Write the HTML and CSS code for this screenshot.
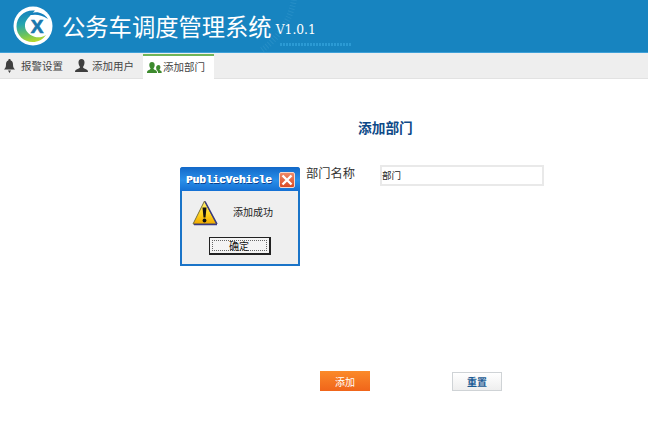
FILE: index.html
```html
<!DOCTYPE html>
<html lang="zh">
<head>
<meta charset="utf-8">
<title>公务车调度管理系统</title>
<link rel="stylesheet" href="styles.css">
</head>
<body>
<header class="top">
  <svg class="logo" width="40" height="40" viewBox="0 0 40 40">
    <defs>
      <linearGradient id="cg" x1="0.3" y1="0" x2="0.5" y2="1">
        <stop offset="0" stop-color="#1480bd"/><stop offset="0.4" stop-color="#25a5b0"/><stop offset="0.75" stop-color="#6cc35c"/><stop offset="1" stop-color="#b5d82e"/>
      </linearGradient>
    </defs>
    <circle cx="20" cy="20" r="19.500" fill="#fff"/>
    <path d="M22 4.500C11 3.500 3.500 11 3.500 20.500 3.500 29.500 11 36 19.500 36c5.500 0 10.500-2.500 13.500-7-3.500 2.300-8 3-11.500 1.700C15 28.500 11.500 24 12 18.500 12.500 14 16.500 10.500 22 4.500z" fill="url(#cg)"/>
    <path d="M15 9C21 4.500 30 5.500 35 13c-5-3-9-4.300-13-4.300-2.500 0-5 .5-7 .3z" fill="#1480bd"/>
    <text x="24" y="27" text-anchor="middle" class="logo-x">X</text>
  </svg>
  <h1 class="brand">公务车调度管理系统</h1>
  <span class="version">V1.0.1</span>
  <svg class="deco" width="100" height="52" viewBox="0 0 100 52">
    <path d="M6 50C20 40 34 22 38 0" fill="none" stroke="#6cbce2" stroke-width="6" stroke-dasharray="1 2" opacity=".18"/>
    <path d="M24 44.500H96" stroke="#2f9fd8" stroke-width="3" stroke-dasharray="2 1" opacity=".85"/>
  </svg>
</header>
<nav class="tabs">
  <a class="tab tab-alarm">
    <svg width="11" height="14" viewBox="0 0 11 14"><path d="M5.500 0c1 0 1.200.7 1.200 1.400C8.500 2 9 3.500 9 5.500c0 2.500.7 3.700 2 5H0c1.300-1.300 2-2.500 2-5 0-2 .5-3.500 2.300-4.100C4.300.7 4.500 0 5.500 0zM4 11.500h3L5.500 14z" fill="#3f3f3f"/></svg>
    报警设置
  </a>
  <a class="tab tab-user">
    <svg width="13" height="14" viewBox="0 0 13 14"><path d="M6.500 0C8.500 0 9.500 1.500 9.500 3.500S8.500 7.500 8 8c0 1 1.500 1.500 3 2.200 1.300.6 2 1.300 2 2.800H0c0-1.500.7-2.200 2-2.800C3.500 9.500 5 9 5 8c-.5-.5-1.500-2.500-1.500-4.500S4.500 0 6.500 0z" fill="#3f3f3f"/></svg>
    添加用户
  </a>
  <a class="tab tab-active">
    <svg width="15" height="13" viewBox="0 0 15 13"><path d="M5 1c1.700 0 2.700 1.200 2.700 3S6.800 7 6.400 7.500c0 .8 1.300 1.200 2.300 1.800 1 .5 1.300 1.300 1.300 2.700H0c0-1.400.3-2.200 1.300-2.700 1-.6 2.300-1 2.300-1.800C3.200 7 2.300 5.800 2.300 4S3.300 1 5 1z" fill="#3d8a2e"/><path d="M11.500 4c1.200 0 1.900.9 1.900 2.200s-.6 2-.9 2.400c0 .5.700.8 1.400 1.200.7.400.8 1 .8 2.200h-3.600c0-1.500-.5-2.500-1.700-3.300.2-.4-.3-1.300-.3-2.500C9.600 4.900 10.300 4 11.500 4z" fill="#3d8a2e"/></svg>
    添加部门
  </a>
</nav>
<main class="page">
  <h2 class="title">添加部门</h2>
  <form class="form">
    <div class="field">
      <label class="label" for="dept">部门名称</label>
      <input class="input" id="dept" type="text" value="部门">
    </div>
    <div class="actions">
      <button class="btn btn-primary" type="button">添加</button>
      <button class="btn btn-reset" type="button">重置</button>
    </div>
  </form>
</main>
<div class="dialog" role="alertdialog">
  <div class="dialog-bar">
    <span class="dialog-title">PublicVehicle</span>
    <span class="dialog-close"><svg width="12" height="12" viewBox="0 0 12 12"><path d="M1.500 1.500l9 9M10.500 1.500l-9 9" stroke="#fff" stroke-width="2.400"/></svg></span>
  </div>
  <div class="dialog-body">
    <div class="dialog-msg">
      <svg width="26" height="26" viewBox="0 0 26 26">
        <defs><linearGradient id="wg" x1="0" y1="0" x2="0" y2="1"><stop offset="0" stop-color="#fff27a"/><stop offset="0.6" stop-color="#ffd21e"/><stop offset="1" stop-color="#f0a800"/></linearGradient></defs>
        <path d="M12.500 1L24.500 24H1z" fill="url(#wg)" stroke="#77703a" stroke-width="1" stroke-linejoin="round"/>
        <path d="M25 24.500H2M13 1.500L25 24" fill="none" stroke="#3a3a80" stroke-width="1.500"/>
        <path d="M10.500 7.500h4l-1 10h-2z" fill="#111"/><circle cx="12.500" cy="20.500" r="1.900" fill="#111"/>
      </svg>
      <span class="dialog-text">添加成功</span>
    </div>
    <button class="dialog-ok" type="button"><span class="dialog-ok-in">确定</span></button>
  </div>
</div>
</body>
</html>
```
FILE: styles.css
```css
* { box-sizing: border-box; }
html, body { margin: 0; height: 100%; }
body {
  width: 648px;
  height: 432px;
  overflow: hidden;
  background: #fff;
  position: relative;
  font-family: "Noto Sans CJK SC", "Liberation Sans", sans-serif;
  color: #333;
}
.top {
  height: 53px;
  background: #1784c0;
  border-bottom: 1px solid #3ea0d8;
  display: flex;
  align-items: center;
  padding-left: 13px;
  position: relative;
}
.logo { flex: none; }
.logo-x {
  font: bold 19px "Liberation Sans", sans-serif;
  fill: #1a78ae;
  stroke: #1a78ae;
  stroke-width: 0.7px;
}
.brand {
  margin: 0 0 0 9px;
  font-size: 23.300px;
  font-weight: 400;
  color: #fff;
  line-height: 1;
  white-space: nowrap;
  position: relative;
  top: 1px;
}
.version {
  margin-left: 4px;
  margin-top: 7px;
  font: 12.300px "DejaVu Serif", serif;
  color: #fff;
}
.deco { position: absolute; left: 256px; top: 0; }
.tabs {
  height: 26px;
  background: #eee;
  border-bottom: 1px solid #e2e2e2;
  display: flex;
  align-items: stretch;
  padding-left: 4px;
}
.tab {
  display: flex;
  align-items: center;
  padding-top: 1px;
  font-size: 10.500px;
  line-height: 1;
  color: #444;
  white-space: nowrap;
}
.tab-alarm { width: 59px; margin-right: 12px; gap: 6px; }
.tab-user { width: 59px; margin-right: 9px; gap: 4px; }
.tab-active {
  width: 71px;
  margin-top: 1px;
  margin-bottom: -1px;
  padding: 0 0 0 4px;
  gap: 1px;
  background: #fff;
  border-top: 2px solid #6fb558;
}
.page { padding-top: 39px; }
.title {
  margin: 0 0 0 358px;
  font-size: 13.700px;
  line-height: 18px;
  font-weight: 700;
  color: #0e4a88;
}
.form { padding-top: 29px; }
.field {
  display: flex;
  align-items: flex-start;
  padding-left: 306px;
  height: 206px;
}
.label {
  font-size: 12.250px;
  line-height: 17px;
  width: 74px;
  color: #333;
}
.input {
  width: 164px;
  height: 21px;
  margin: 0;
  padding: 0 0 2px;
  border: 2px solid #e9e9e9;
  background: #fff;
  font: 9.500px "Noto Sans CJK SC", sans-serif;
  color: #222;
  outline: none;
}
.actions {
  display: flex;
  align-items: flex-start;
  gap: 82px;
  padding-left: 320px;
}
.btn {
  width: 50px;
  height: 20px;
  margin: 0;
  padding: 0;
  font: 10px "Noto Sans CJK SC", sans-serif;
  border: 0;
}
.btn-primary {
  color: #fff;
  background: linear-gradient(#fb8a2a, #f0651a);
}
.btn-reset {
  margin-top: 1px;
  height: 19px;
  color: #1b5b94;
  font-weight: 700;
  background: linear-gradient(#fff, #eeeeee);
  border: 1px solid #cfd3d6;
}
.dialog {
  position: absolute;
  left: 180px;
  top: 167px;
  width: 120px;
  height: 99px;
  background: #1a74c8;
  padding: 0 2px 2px;
  border-radius: 3px 3px 0 0;
  display: flex;
  flex-direction: column;
}
.dialog-bar {
  height: 24px;
  flex: none;
  margin: 0 -2px;
  padding: 1px 5px 0 6px;
  background: linear-gradient(#1268c8, #2a8fe8 55%, #1470d4);
  display: flex;
  align-items: center;
  justify-content: space-between;
  border-radius: 3px 3px 0 0;
}
.dialog-title {
  font: bold 11px "Liberation Mono", monospace;
  color: #fff;
  text-shadow: 0.4px 0 0 #fff, 1px 1px 0 #0b3f8c;
}
.dialog-close {
  width: 16px;
  height: 16px;
  background: linear-gradient(#f08a68, #d94a24);
  border: 1px solid #f5d8cc;
  border-radius: 2px;
  display: flex;
  align-items: center;
  justify-content: center;
}
.dialog-body {
  flex: 1;
  background: #efefef;
  display: flex;
  flex-direction: column;
  align-items: center;
}
.dialog-msg {
  display: flex;
  align-items: center;
  align-self: stretch;
  height: 26px;
  margin-top: 9px;
  padding-left: 10px;
}
.dialog-text {
  margin-left: 15px;
  font-size: 10px;
  color: #222;
  position: relative;
  top: -2px;
}
.dialog-ok {
  margin: 11px 0 0 -1px;
  padding: 2px;
  width: 62px;
  height: 18px;
  background: #f4f4f4;
  border: 1px solid #222;
  border-width: 1px 2px 2px 1px;
  font: 10px "Noto Sans CJK SC", sans-serif;
  color: #111;
}
.dialog-ok-in {
  display: flex;
  align-items: center;
  justify-content: center;
  height: 100%;
  border: 1px dotted #666;
}
```
